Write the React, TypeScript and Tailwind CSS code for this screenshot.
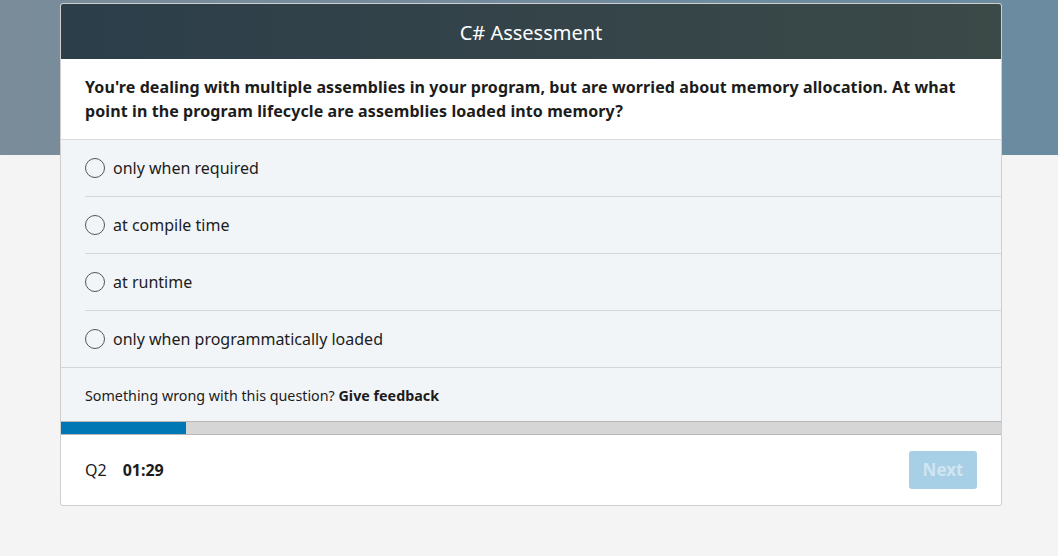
import { useState } from 'react';

const OPTIONS = [
  'only when required',
  'at compile time',
  'at runtime',
  'only when programmatically loaded',
];

export default function App() {
  const [picked, setPicked] = useState<number | null>(null);

  return (
    <div
      className="relative min-h-[556px] bg-[#f4f4f4] text-[#1c1c1c]"
      style={{ fontFamily: '"Noto Sans", "Open Sans", sans-serif' }}
    >
      <div className="h-[155px] bg-gradient-to-r from-[#7a8c9a] to-[#6a8ba0]" />

      <div className="absolute left-[60px] top-[3px] w-[942px] rounded-[3px] border border-[#cfcfcf] bg-white overflow-hidden">
        <div className="h-[55px] pt-[3px] flex items-center justify-center bg-gradient-to-r from-[#2c3e4a] to-[#3b4947] text-white text-[20px]">
          C# Assessment
        </div>

        <div className="px-6 py-4 border-b border-[#d9d9d9] text-[16px] leading-6 font-bold tracking-[0.1px]">
          You're dealing with multiple assemblies in your program, but are worried about memory allocation. At what point in the program lifecycle are assemblies loaded into memory?
        </div>

        <div className="bg-[#f2f5f8]">
          {OPTIONS.map((o, i) => (
            <label key={o} className="block pl-6 cursor-pointer">
              <div className={'flex items-center gap-2 text-[16px] ' + (i < OPTIONS.length - 1 ? 'h-[57px] border-b border-[#d4d7da]' : 'h-[56px]')}>
                <span className="w-5 h-5 rounded-full border-[1.5px] border-[#555] flex items-center justify-center">
                  {picked === i && <span className="w-2.5 h-2.5 rounded-full bg-[#0077b5]" />}
                </span>
                <input type="radio" className="hidden" name="ans" checked={picked === i} onChange={() => setPicked(i)} />
                {o}
              </div>
            </label>
          ))}
        </div>

        <div className="h-[54px] pt-[2px] flex items-center px-6 bg-[#f2f5f8] border-t border-[#d4d7da] text-[14.3px]">
          Something wrong with this question?&nbsp;<span className="font-bold">Give feedback</span>
        </div>

        <div className="h-[14px] bg-[#d6d6d6] border-y border-[#b6b6b6]">
          <div className="h-full w-[125px] bg-[#0077b5]" />
        </div>

        <div className="h-[70px] flex items-center px-6 text-[16px]">
          <span>Q2</span>
          <span className="ml-4 font-bold">01:29</span>
          <button className="ml-auto h-[38px] w-[68px] rounded-[3px] bg-[#a7cfe6] text-[#d1e5f1] font-bold text-[17px]">
            Next
          </button>
        </div>
      </div>
    </div>
  );
}
